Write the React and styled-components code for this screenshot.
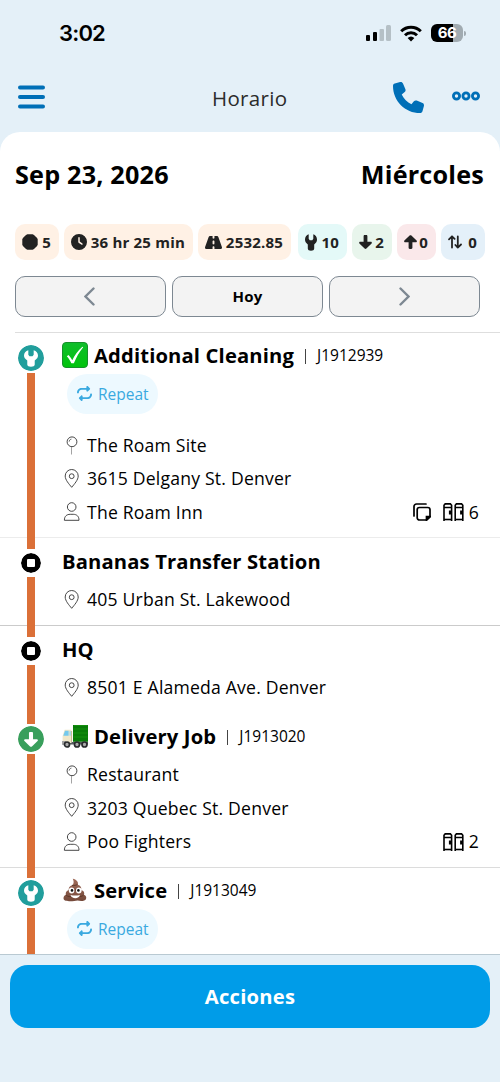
import React from 'react';
import styled, { createGlobalStyle } from 'styled-components';
import { FaPhone, FaRepeat, FaClock, FaRoad } from 'react-icons/fa6';

const GlobalStyle = createGlobalStyle`
  * {
    box-sizing: border-box;
  }

  body {
    margin: 0;
    background: #e4f0f8;
    font-family: 'Open Sans', 'Noto Sans', sans-serif;
    letter-spacing: 0.2px;
    color: #000;
  }

  svg {
    display: block;
    flex-shrink: 0;
  }
`;

const Screen = styled.div`
  display: flex;
  flex-direction: column;
  width: 500px;
  height: 1082px;
  overflow: hidden;
  background: #e4f0f8;
`;

const StatusBar = styled.div`
  display: flex;
  align-items: center;
  justify-content: space-between;
  height: 66px;
  padding: 0 34px 0 59px;
`;

const Time = styled.span`
  font: 600 22px/28px Inter, sans-serif;
  letter-spacing: -0.8px;
`;

const StatusIcons = styled.div`
  display: flex;
  align-items: center;
  gap: 9px;
`;

const BatteryWrap = styled.div`
  display: flex;
  align-items: center;
  gap: 1px;
`;

const Battery = styled.div`
  width: 32px;
  height: 18px;
  border-radius: 6px;
  background: linear-gradient(90deg, #000 0 22px, #a1abb1 22px);
  color: #fff;
  font: 700 15px/18px Inter, sans-serif;
  letter-spacing: -0.4px;
  text-align: center;
`;

const BatteryNub = styled.div`
  width: 2px;
  height: 5px;
  border-radius: 0 2px 2px 0;
  background: #a1abb1;
`;

const Header = styled.header`
  display: grid;
  grid-template-columns: 1fr auto 1fr;
  align-items: center;
  height: 66px;
  padding: 0 20.5px 4px 18px;
  color: #006fb7;
`;

const HeaderTitle = styled.h1`
  margin: 2px 0 0 2px;
  font-size: 20.5px;
  line-height: 28px;
  font-weight: 400;
  letter-spacing: 0.35px;
  color: #2b2b2b;
`;

const HeaderActions = styled.div`
  display: flex;
  align-items: center;
  justify-content: flex-end;
  gap: 28px;

  svg:last-child {
    margin-top: -2px;
  }
`;

const Sheet = styled.main`
  display: flex;
  flex-direction: column;
  height: 822px;
  border-radius: 20px 20px 0 0;
  background: #fff;
  overflow: hidden;
`;

const DateRow = styled.div`
  display: flex;
  justify-content: space-between;
  height: 92px;
  padding: 0 16px 0 15px;
  font-size: 25.2px;
  line-height: 84px;
  font-weight: 700;
`;

const Chips = styled.div`
  display: flex;
  padding: 0 15px;
`;

const Chip = styled.div`
  display: flex;
  align-items: center;
  justify-content: space-between;
  width: ${(props) => props.$width}px;
  height: 36px;
  margin-right: ${(props) => props.$after || 5}px;
  padding: 0 8px 0 7px;
  flex-shrink: 0;
  border-radius: 10px;
  background: ${(props) => props.$color};
  color: #222;
  font-size: 15px;
  font-weight: 700;
  white-space: nowrap;
`;

const DayNav = styled.div`
  display: grid;
  grid-template-columns: repeat(3, 1fr);
  gap: 6px;
  padding: 16px 20px 0 15px;
  margin-bottom: 15px;
`;

const NavButton = styled.button`
  display: flex;
  align-items: center;
  justify-content: center;
  height: 41px;
  padding: 0 0 1px;
  border: 1.5px solid #7d8892;
  border-radius: 10px;
  background: #f3f3f3;
  color: #7d8892;
  font: 700 15px 'Open Sans', sans-serif;
  letter-spacing: 0.25px;

  span {
    color: #000;
  }

  svg {
    margin: ${(props) => (props.$next ? '0' : '0 3px 0 0')};
  }
`;

const Stop = styled.section`
  display: flex;
  height: ${(props) => props.$height}px;
  flex-shrink: 0;
  background: linear-gradient(${(props) => props.$line || '#fff'}, ${(props) => props.$line || '#fff'}) no-repeat
    ${(props) => props.$inset || 0}px 0 / 100% 1px;
`;

const Rail = styled.div`
  display: flex;
  flex-direction: column;
  align-items: center;
  width: 62px;
  flex-shrink: 0;
`;

const Track = styled.div`
  width: 8px;
  height: ${(props) => props.$height || 'auto'};
  flex: ${(props) => (props.$height ? 'none' : 1)};
  background: ${(props) => (props.$hidden ? 'transparent' : '#db7038')};
`;

const Node = styled.div`
  display: flex;
  align-items: center;
  justify-content: center;
  width: ${(props) => props.$size}px;
  height: ${(props) => props.$size}px;
  border: ${(props) => props.$ring}px solid #fff;
  border-radius: 50%;
  background: ${(props) => props.$color};
  background-clip: padding-box;
  color: #fff;
`;

const NodeSquare = styled.div`
  width: 8px;
  height: 8px;
  border-radius: 1px;
  background: #fff;
`;

const Content = styled.div`
  flex: 1;
  min-width: 0;
`;

const StopTitle = styled.h2`
  display: flex;
  align-items: center;
  height: ${(props) => props.$height}px;
  margin: 0;
  font-size: 20.2px;
  line-height: 28px;
  font-weight: 700;
  letter-spacing: 0.15px;
  white-space: nowrap;

  svg {
    margin-right: 6px;
  }
`;

const Bar = styled.span`
  width: 1px;
  height: 15px;
  margin: 2px 11px 0 11px;
  background: #444;
`;

const JobNumber = styled.span`
  font-size: 15.5px;
  line-height: 28px;
  font-weight: 400;
  letter-spacing: 0;
`;

const RepeatPill = styled.div`
  display: flex;
  align-items: center;
  gap: 6px;
  width: 91px;
  height: 40px;
  margin: -4px 0 0 5px;
  padding: 0 0 1px 10px;
  border-radius: 20px;
  background: #edf9ff;
  color: #3aa9e0;
  font-size: 15.5px;
  letter-spacing: 0;
`;

const Details = styled.div`
  margin-top: ${(props) => props.$offset}px;
`;

const Detail = styled.div`
  display: flex;
  align-items: center;
  height: 33.3px;
  padding-right: 21px;
  font-size: 17.6px;
  line-height: 33.3px;

  > svg {
    margin: -1px 6px 0 0;
  }
`;

const Assets = styled.div`
  display: flex;
  align-items: center;
  margin-left: auto;

  svg {
    margin-right: 5px;
  }

  svg:first-child:not(:last-child) {
    margin-right: ${(props) => (props.$copy ? 12 : 5)}px;
  }
`;

const Footer = styled.footer`
  flex: 1;
  padding: 10px;
  border-top: 1px solid #b9c9d2;
`;

const ActionButton = styled.button`
  width: 100%;
  height: 63px;
  padding: 0 0 1px;
  border: 0;
  border-radius: 18px;
  background: #009ce8;
  color: #fff;
  font: 700 20.2px 'Open Sans', sans-serif;
  letter-spacing: 0.25px;
`;

const SignalIcon = () => (
  <svg width="25" height="17" viewBox="0 0 25 17">
    <rect x="0" y="10" width="4" height="6" rx="1" />
    <rect x="7" y="7" width="4" height="9" rx="1" />
    <rect x="13.5" y="4" width="4.5" height="12" rx="1" fill="#b5c0c6" />
    <rect x="20" y="0" width="5" height="16" rx="1.5" fill="#b5c0c6" />
  </svg>
);

const WifiIcon = () => (
  <svg width="22" height="17" viewBox="0 0 22 17" fill="none" stroke="#000" strokeWidth="3">
    <path d="M1.2 6.2a14 14 0 0 1 19.6 0" />
    <path d="M5 10.2a8.6 8.6 0 0 1 12 0" />
    <path d="M7.6 13a5 5 0 0 1 6.8 0L11 16.5z" fill="#000" stroke="none" />
  </svg>
);

const MenuIcon = () => (
  <svg width="27" height="24" viewBox="0 0 27 24" fill="currentColor">
    <rect y="0.5" width="27" height="4" rx="2" />
    <rect y="10" width="27" height="4" rx="2" />
    <rect y="19.5" width="27" height="4" rx="2" />
  </svg>
);

const MoreIcon = () => (
  <svg width="28" height="10" viewBox="0 0 28 10" fill="none" stroke="currentColor" strokeWidth="2.8">
    <circle cx="4.5" cy="5" r="3.1" />
    <circle cx="14" cy="5" r="3.1" />
    <circle cx="23.5" cy="5" r="3.1" />
  </svg>
);

const OctagonIcon = () => (
  <svg width="16" height="16" viewBox="0 0 16 16" fill="currentColor">
    <path d="M5.4.3h5.2l1.4.6L15.1 4l.6 1.4v5.2l-.6 1.4-3.1 3.1-1.4.6H5.4L4 15.1.9 12l-.6-1.4V5.4L.9 4 4 .9z" />
  </svg>
);

const WrenchIcon = ({ width = 12, height = 17 }) => (
  <svg width={width} height={height} viewBox="0 0 12 17" preserveAspectRatio="none" fill="currentColor">
    <path d="M3.7.3v4.5l1 1.4h2.6l1-1.4V.3C10.6 1.2 12 3.2 12 5.6c0 2-1 3.7-2.8 4.8v4c0 1.3-1.4 2.3-3.2 2.3s-3.2-1-3.2-2.3v-4C1 9.3 0 7.6 0 5.6 0 3.2 1.4 1.2 3.7.3z" />
  </svg>
);

const BlockArrow = ({ up, size = 13 }) => (
  <svg width={size} height={size + 1} viewBox="0 0 13 14" fill="currentColor">
    <g transform={up ? 'rotate(180 6.5 7)' : undefined}>
      <path d="M4.6 1.2C4.6.5 5.1 0 5.7 0h1.6c.6 0 1.1.5 1.1 1.2v5.6h3.4c1 0 1.4 1.1.8 1.7l-5.2 5c-.5.5-1.3.5-1.8 0l-5.2-5C-.2 7.9.2 6.8 1.2 6.8h3.4z" />
    </g>
  </svg>
);

const UpDownIcon = () => (
  <svg width="14" height="14" viewBox="0 0 14 14" fill="none" stroke="currentColor" strokeWidth="1.8" strokeLinecap="round" strokeLinejoin="round">
    <path d="M4 12.5v-11M1 4.3l3-3 2.6 2.6M9.8 1.5v11M7.4 10l2.4 2.6L13 9.5" />
  </svg>
);

const Chevron = ({ right }) => (
  <svg width="11" height="19" viewBox="0 0 11 19" fill="none" stroke="currentColor" strokeWidth="2.4" strokeLinecap="round">
    <path d={right ? 'M1.5 1.5l8 8-8 8' : 'M9.5 1.5l-8 8 8 8'} />
  </svg>
);

const SiteIcon = () => (
  <svg width="19" height="19" viewBox="0 0 19 19" fill="none" stroke="#333" strokeWidth="0.9">
    <circle cx="10" cy="5.8" r="4.9" />
    <path d="M7.2 5.6c.1-1.3.9-2.2 2.2-2.5" strokeWidth="0.8" />
    <path d="M9.5 11v7.5" stroke="#999" />
  </svg>
);

const PinIcon = () => (
  <svg width="19" height="19" viewBox="0 0 19 19" fill="none" stroke="#333" strokeWidth="0.9">
    <path d="M9.7 18.3C7 15 3.2 10.9 3.2 7a6.5 6.5 0 0 1 13 0c0 3.9-3.8 8-6.5 11.3z" />
    <circle cx="9.7" cy="7.2" r="2.4" />
  </svg>
);

const UserIcon = () => (
  <svg width="19" height="19" viewBox="0 0 19 19" fill="none" stroke="#333" strokeWidth="0.9">
    <circle cx="9.7" cy="5" r="4.3" />
    <path d="M2.4 18.3c-.1-4 2.3-6 5.8-6h3c3.5 0 5.9 2 5.8 6z" />
  </svg>
);

const CopyIcon = () => (
  <svg width="18" height="18" viewBox="0 0 18 18" fill="none" stroke="#000" strokeWidth="1.7">
    <path d="M1 13V3.5A2.5 2.5 0 0 1 3.5 1H13" strokeLinecap="round" />
    <path d="M6.5 4.5h8.2a2.3 2.3 0 0 1 2.3 2.3v7L13.7 17H6.5a2.3 2.3 0 0 1-2.3-2.3V6.8a2.3 2.3 0 0 1 2.3-2.3z" />
    <path d="M13.5 17v-3.5H17z" fill="#000" />
  </svg>
);

const ToiletsIcon = () => (
  <svg width="21" height="18" viewBox="0 0 21 18" fill="none" stroke="#000" strokeWidth="1.6">
    {[0, 11.2].map((x) => (
      <g key={x} transform={`translate(${x} 0)`}>
        <path d="M1 18V2.3L2.2.9h5.2l1.2 1.4V18M1 4.5h7.6" />
        <path d="M1 16.5h7.6" />
        <path d="M7 7.5v4" strokeWidth="2.2" />
      </g>
    ))}
  </svg>
);

const CheckEmoji = () => (
  <svg width="26" height="26" viewBox="0 0 26 26">
    <defs>
      <linearGradient id="check" x2="0" y2="1">
        <stop stopColor="#10bd2c" />
        <stop offset="1" stopColor="#00c40b" />
      </linearGradient>
    </defs>
    <rect x="0.5" y="0.5" width="25" height="25" rx="3.5" fill="url(#check)" stroke="#16902a" />
    <path d="M4.8 14.2l1.7-1.1c1.5 1.5 2.7 3.2 3.8 5.2C12.7 13 16 8.6 20.4 4.7l.8.6c-4 5-6.9 9.9-9.3 16H9.3c-1.2-2.8-2.6-5.1-4.5-7.1z" fill="#fff" />
  </svg>
);

const TruckEmoji = () => (
  <svg width="26" height="23" viewBox="0 0 26 23">
    <path d="M0 17h26v2.5H0z" fill="#555b5e" />
    <path d="M11 0h15v16.8H11z" fill="#087c08" />
    <path d="M12 .5h13.5M11.5 4h14M11.5 8h14M11.5 12h14" stroke="#15900f" />
    <path d="M2.6 4.8h6.9V18H.6v-7z" fill="#f0e7c8" />
    <path d="M3 5.7h3.6v5.1H1.3z" fill="#74c9ed" />
    <path d="M7.4 6.2h1.8v4.5H7.4z" fill="#a7d9e8" />
    <path d="M9.6 6v11" stroke="#c3b68b" />
    <path d="M0 16h4v3H0z" fill="#a3a3a3" />
    {[5, 15, 22.5].map((x) => (
      <circle key={x} cx={x} cy="19.5" r="2.5" fill="#aaa" stroke="#292b2d" strokeWidth="1.7" />
    ))}
  </svg>
);

const PooEmoji = () => (
  <svg width="26" height="24" viewBox="0 0 26 24">
    <defs>
      <linearGradient id="poo" x2="0" y2="1">
        <stop stopColor="#a06c5a" />
        <stop offset="1" stopColor="#75493a" />
      </linearGradient>
    </defs>
    <path d="M10.8.8c3.5.8 5.9 2.9 5 6 2.7.7 4 2.6 3.3 5.1 2.7.7 3.7 2.5 2.9 4.9 2 .8 2.7 2.5 2 4.1-1 2.5-5.7 2.2-8.500 1.600-4 .8-13.200 1.500-13.900-1.500-.3-1.800.4-3.500 2.200-4.200-.4-2.500.7-4.100 3-4.700-.3-2.600.9-4.200 3.200-4.800 1.700-.9 2.300-3.200.8-6.500z" fill="url(#poo)" />
    <path d="M6.5 12.2c4 .8 8.5-.1 11.5-2M10 7.5c2 .2 4-.2 5.5-1M4.2 17.3c1.8 1.4 4.3 1.5 5.8 1.2M15 18.5c3 .4 5.3-.3 6.5-1.3" fill="none" stroke="#4f2e20" strokeWidth="0.7" />
    <ellipse cx="9.6" cy="12.4" rx="2.8" ry="3" fill="#fff" />
    <ellipse cx="16.8" cy="12.4" rx="2.8" ry="3" fill="#fff" />
    <circle cx="10" cy="12.4" r="1.3" fill="#111" />
    <circle cx="16.4" cy="12.4" r="1.3" fill="#111" />
    <path d="M8.5 17c3 .8 6.5.8 9.4 0-.5 4.2-8.5 4.2-9.4 0z" fill="#fff" />
  </svg>
);

const detailIcons = { site: SiteIcon, address: PinIcon, customer: UserIcon };

const nodes = {
  service: { color: '#219e9c', size: 30, ring: 2, icon: <WrenchIcon width={14} height={17} /> },
  delivery: { color: '#399f5c', size: 30, ring: 2, icon: <BlockArrow size={14} /> },
  place: { color: '#000', size: 28, ring: 4, icon: <NodeSquare /> },
};

const stops = [
  {
    title: 'Additional Cleaning', job: 'J1912939', emoji: <CheckEmoji />, type: 'service', repeat: true,
    height: 205, titleHeight: 46, offset: 15, line: '#dedede', inset: 15, first: true,
    details: [['site', 'The Roam Site'], ['address', '3615 Delgany St. Denver'], ['customer', 'The Roam Inn']],
    copy: true, toilets: 6,
  },
  {
    title: 'Bananas Transfer Station', type: 'place', height: 88, titleHeight: 48, offset: -1.6, line: '#ececec',
    details: [['address', '405 Urban St. Lakewood']],
  },
  {
    title: 'HQ', type: 'place', height: 88, titleHeight: 47, offset: -0.6, line: '#cbcbcb',
    details: [['address', '8501 E Alameda Ave. Denver']],
  },
  {
    title: 'Delivery Job', job: 'J1913020', emoji: <TruckEmoji />, type: 'delivery',
    height: 154, titleHeight: 46, offset: -0.6,
    details: [['site', 'Restaurant'], ['address', '3203 Quebec St. Denver'], ['customer', 'Poo Fighters']],
    toilets: 2,
  },
  {
    title: 'Service', job: 'J1913049', emoji: <PooEmoji />, type: 'service', repeat: true,
    height: 87, titleHeight: 46, offset: 0, line: '#dcdcdc', details: [],
  },
];

const RouteStop = ({ stop }) => {
  const node = nodes[stop.type];
  return (
    <Stop $height={stop.height} $line={stop.line} $inset={stop.inset}>
      <Rail>
        <Track $height={`${26 - node.size / 2}px`} $hidden={stop.first} />
        <Node $color={node.color} $size={node.size} $ring={node.ring}>{node.icon}</Node>
        <Track />
      </Rail>
      <Content>
        <StopTitle $height={stop.titleHeight}>
          {stop.emoji}
          {stop.title}
          {stop.job && (
            <>
              <Bar />
              <JobNumber>{stop.job}</JobNumber>
            </>
          )}
        </StopTitle>
        {stop.repeat && (
          <RepeatPill>
            <FaRepeat size={15} />
            Repeat
          </RepeatPill>
        )}
        <Details $offset={stop.offset}>
          {stop.details.map(([kind, text]) => {
            const Icon = detailIcons[kind];
            return (
              <Detail key={kind}>
                <Icon />
                {text}
                {kind === 'customer' && (
                  <Assets $copy={stop.copy}>
                    {stop.copy && <CopyIcon />}
                    <ToiletsIcon />
                    {stop.toilets}
                  </Assets>
                )}
              </Detail>
            );
          })}
        </Details>
      </Content>
    </Stop>
  );
};

const App = () => {
  return (
    <>
      <GlobalStyle />
      <Screen>
        <StatusBar>
          <Time>3:02</Time>
          <StatusIcons>
            <SignalIcon />
            <WifiIcon />
            <BatteryWrap>
              <Battery>66</Battery>
              <BatteryNub />
            </BatteryWrap>
          </StatusIcons>
        </StatusBar>
        <Header>
          <MenuIcon />
          <HeaderTitle>Horario</HeaderTitle>
          <HeaderActions>
            <FaPhone size={31} />
            <MoreIcon />
          </HeaderActions>
        </Header>
        <Sheet>
          <DateRow>
            <span>Sep 23, 2026</span>
            <span>Miércoles</span>
          </DateRow>
          <Chips>
            <Chip $width={44} $color="#fff1e5"><OctagonIcon />5</Chip>
            <Chip $width={129} $color="#fff1e5"><FaClock size={16} />36 hr 25 min</Chip>
            <Chip $width={93} $after={7} $color="#fff1e5"><FaRoad size={17} />2532.85</Chip>
            <Chip $width={49} $color="#e4f9f8"><WrenchIcon />10</Chip>
            <Chip $width={40} $color="#e8f5ec"><BlockArrow />2</Chip>
            <Chip $width={39} $color="#fae8ea"><BlockArrow up />0</Chip>
            <Chip $width={44} $color="#e4f0f9"><UpDownIcon />0</Chip>
          </Chips>
          <DayNav>
            <NavButton><Chevron /></NavButton>
            <NavButton><span>Hoy</span></NavButton>
            <NavButton $next><Chevron right /></NavButton>
          </DayNav>
          {stops.map((stop) => (
            <RouteStop key={stop.title} stop={stop} />
          ))}
        </Sheet>
        <Footer>
          <ActionButton>Acciones</ActionButton>
        </Footer>
      </Screen>
    </>
  );
};

export default App;
